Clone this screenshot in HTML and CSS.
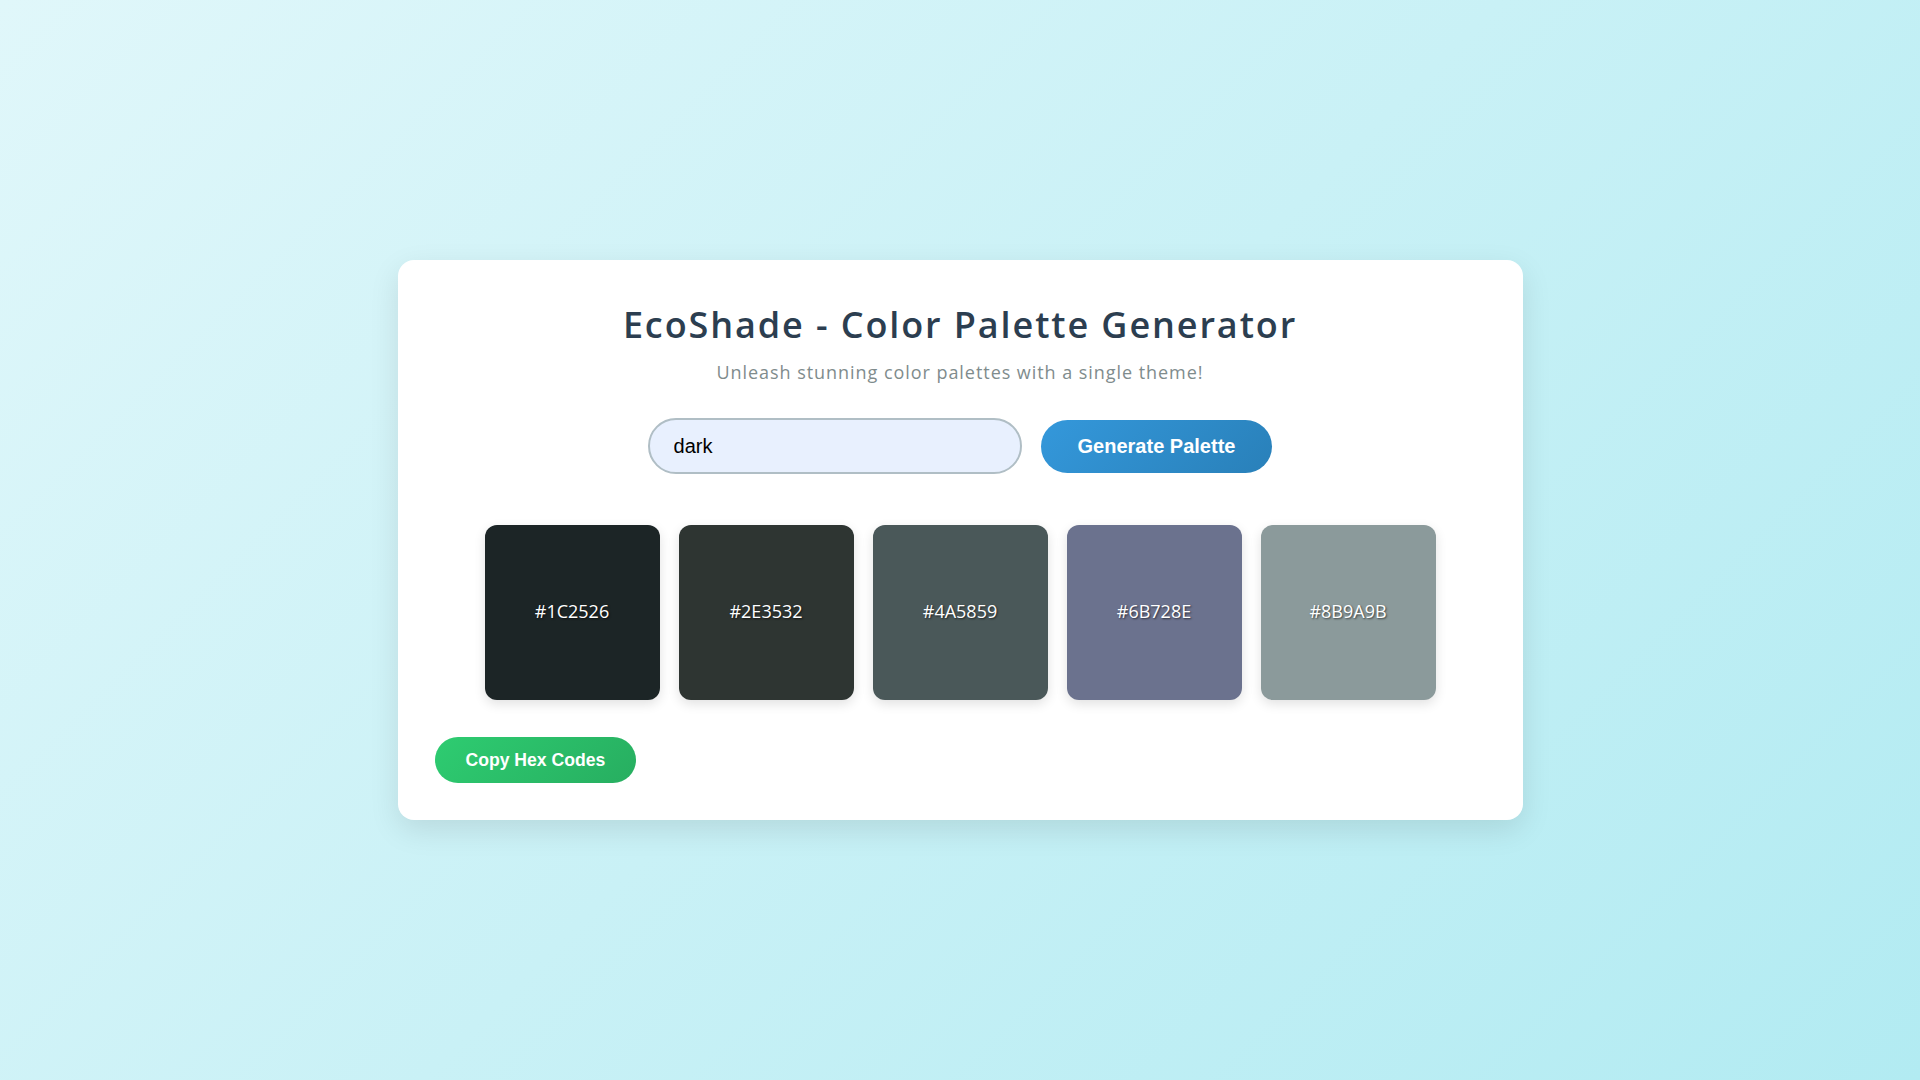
FILE: index.html
```html
<!DOCTYPE html>
<html lang="en">
<head>
<meta charset="UTF-8">
<title>EcoShade - Color Palette Generator</title>
<link rel="stylesheet" href="styles.css">
</head>
<body>
  <main class="card">
    <h1 class="title">EcoShade - Color Palette Generator</h1>
    <p class="subtitle">Unleash stunning color palettes with a single theme!</p>
    <div class="controls">
      <input class="theme-input" type="text" value="dark">
      <button class="btn btn-generate">Generate Palette</button>
    </div>
    <div class="palette">
      <div class="swatch" style="background:#1C2526"><span>#1C2526</span></div>
      <div class="swatch" style="background:#2E3532"><span>#2E3532</span></div>
      <div class="swatch" style="background:#4A5859"><span>#4A5859</span></div>
      <div class="swatch" style="background:#6B728E"><span>#6B728E</span></div>
      <div class="swatch" style="background:#8B9A9B"><span>#8B9A9B</span></div>
    </div>
    <div class="actions">
      <button class="btn btn-copy">Copy Hex Codes</button>
    </div>
  </main>
</body>
</html>
```
FILE: styles.css
```css
* { box-sizing: border-box; }
html, body { height: 100%; }
body {
  margin: 0;
  min-height: 100vh;
  display: flex;
  align-items: center;
  justify-content: center;
  background: linear-gradient(135deg, #e0f7fa 0%, #b2ebf2 100%);
  font-family: "Open Sans", "DejaVu Sans", sans-serif;
}
.card {
  width: 1125px;
  background: #ffffff;
  border-radius: 16px;
  box-shadow: 0 10px 30px rgba(0, 0, 0, 0.1);
  padding: 43px 37px 37px;
  text-align: center;
}
.title {
  margin: 0;
  font-size: 36px;
  line-height: 44px;
  font-weight: 600;
  color: #2c3e50;
  letter-spacing: 1.9px;
}
.subtitle {
  margin: 13px 0 0;
  font-size: 18px;
  line-height: 24px;
  color: #7f8c8d;
  letter-spacing: 0.95px;
}
.controls {
  display: flex;
  justify-content: center;
  align-items: center;
  gap: 19px;
  margin-top: 34px;
}
.theme-input {
  width: 374px;
  height: 56px;
  padding: 0 24px;
  border: 2px solid #b0bec5;
  border-radius: 28px;
  background: #e8f0fe;
  font-family: "Liberation Sans", Arial, sans-serif;
  font-size: 20px;
  color: #000;
  outline: none;
}
.btn {
  border: none;
  border-radius: 30px;
  color: #fff;
  font-family: "Liberation Sans", Arial, sans-serif;
  font-weight: 700;
  cursor: pointer;
}
.btn-generate {
  height: 53px;
  padding: 0 37px;
  font-size: 20px;
  background: linear-gradient(135deg, #3498db, #2980b9);
}
.palette {
  display: flex;
  justify-content: center;
  gap: 19px;
  margin-top: 51px;
}
.swatch {
  width: 175px;
  height: 175px;
  border-radius: 12px;
  box-shadow: 0 4px 12px rgba(0, 0, 0, 0.12);
  display: flex;
  align-items: center;
  justify-content: center;
  color: #fff;
  font-size: 18px;
  font-weight: 500;
  text-shadow: 1px 1px 2px rgba(0, 0, 0, 0.6);
}
.swatch span {
  padding-bottom: 4px;
}
.actions {
  display: flex;
  margin-top: 37px;
}
.btn-copy {
  height: 46px;
  padding: 0 31px;
  font-size: 17.6px;
  background: linear-gradient(135deg, #2ecc71, #27ae60);
}
```
